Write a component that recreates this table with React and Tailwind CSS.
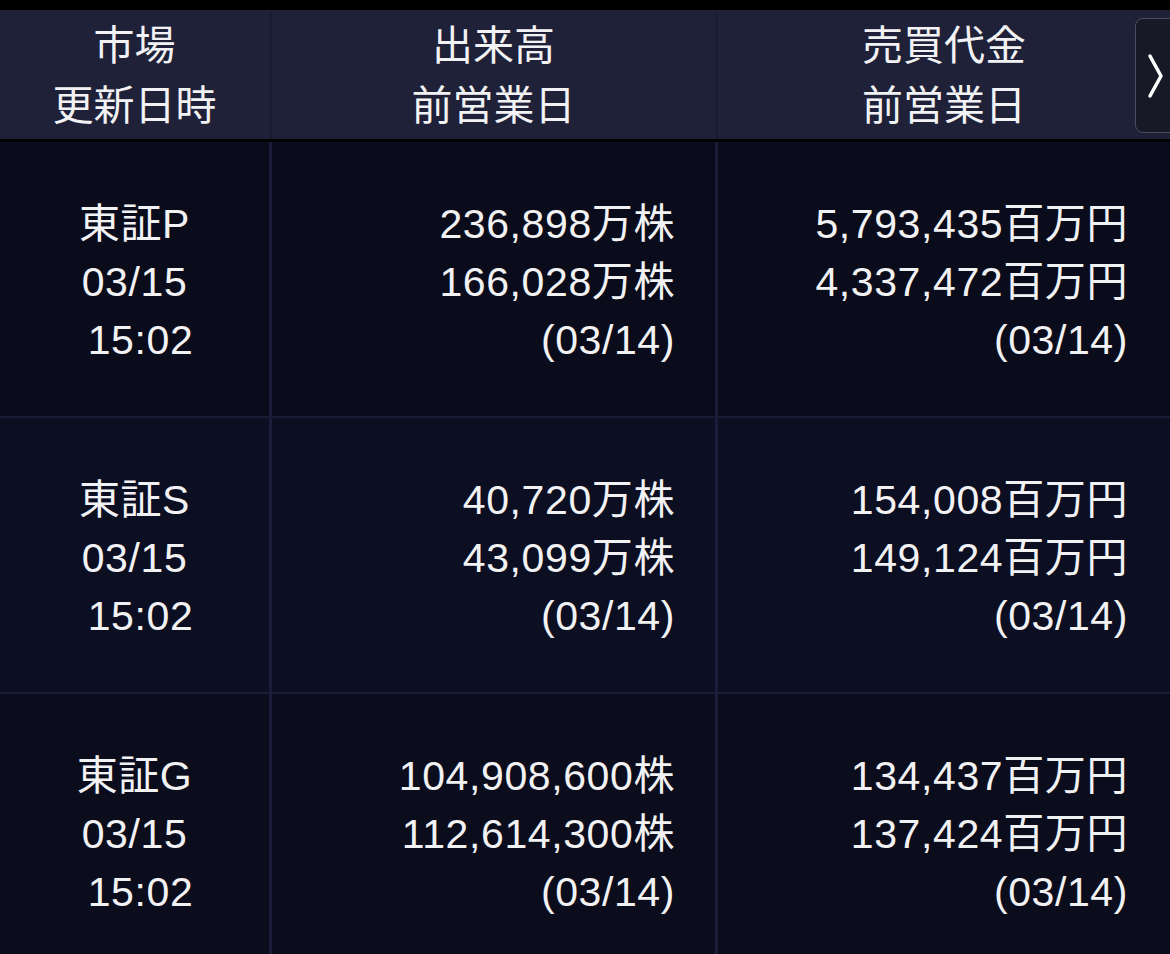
const rows = [
  {
    market: '東証P',
    volume: ['236,898万株', '166,028万株'],
    value: ['5,793,435百万円', '4,337,472百万円'],
    bg: 'bg-[#0a0c1b]',
  },
  {
    market: '東証S',
    volume: ['40,720万株', '43,099万株'],
    value: ['154,008百万円', '149,124百万円'],
    bg: 'bg-[#0c0e22]',
  },
  {
    market: '東証G',
    volume: ['104,908,600株', '112,614,300株'],
    value: ['134,437百万円', '137,424百万円'],
    bg: 'bg-[#0b0d1d]',
  },
];

const font = { fontFamily: '"Liberation Sans", "Noto Sans CJK JP", sans-serif' };

export default function App() {
  return (
    <div className="w-[1170px] h-[954px] overflow-hidden bg-black text-[#f2f2f4] pt-[10px]" style={font}>
      {/* header */}
      <div className="relative flex h-[129px] bg-[#1f2139] text-[41px] leading-[60px] border-b-[3px] border-black box-content">
        <div className="w-[269px] flex flex-col items-center justify-center pt-[2px]">
          <span>市場</span>
          <span>更新日時</span>
        </div>
        <div className="w-[446px] border-l-[3px] border-[#1a1c32] flex flex-col items-center justify-center pt-[2px]">
          <span>出来高</span>
          <span>前営業日</span>
        </div>
        <div className="flex-1 border-l-[3px] border-[#1a1c32] flex flex-col items-center justify-center pt-[2px]">
          <span>売買代金</span>
          <span>前営業日</span>
        </div>
        <button className="absolute left-[1135px] top-[8px] w-[50px] h-[115px] rounded-[8px] border border-[#4a4d5e] bg-[#171927] flex items-center pl-[11px]">
          <svg width="18" height="46" viewBox="0 0 18 46">
            <path d="M3 3 L14 23 L3 43" fill="none" stroke="#ffffff" strokeWidth="3.5" strokeLinecap="round" strokeLinejoin="round" />
          </svg>
        </button>
      </div>

      {/* rows */}
      {rows.map((r) => (
        <div key={r.market} className={`flex h-[276px] border-b-2 border-[#1a1c36] text-[41px] leading-[58px] tracking-[0.6px] ${r.bg}`}>
          <div className="w-[269px] flex flex-col items-center justify-center pt-[6px]">
            <span>{r.market}</span>
            <span>03/15</span>
            <span className="whitespace-pre"> 15:02</span>
          </div>
          <div className="w-[446px] border-l-[3px] border-[#1a1c3a] flex flex-col items-end justify-center pt-[6px] pr-[40px]">
            <span>{r.volume[0]}</span>
            <span>{r.volume[1]}</span>
            <span>(03/14)</span>
          </div>
          <div className="flex-1 border-l-[3px] border-[#1a1c3a] flex flex-col items-end justify-center pt-[6px] pr-[42px]">
            <span>{r.value[0]}</span>
            <span>{r.value[1]}</span>
            <span>(03/14)</span>
          </div>
        </div>
      ))}
    </div>
  );
}
